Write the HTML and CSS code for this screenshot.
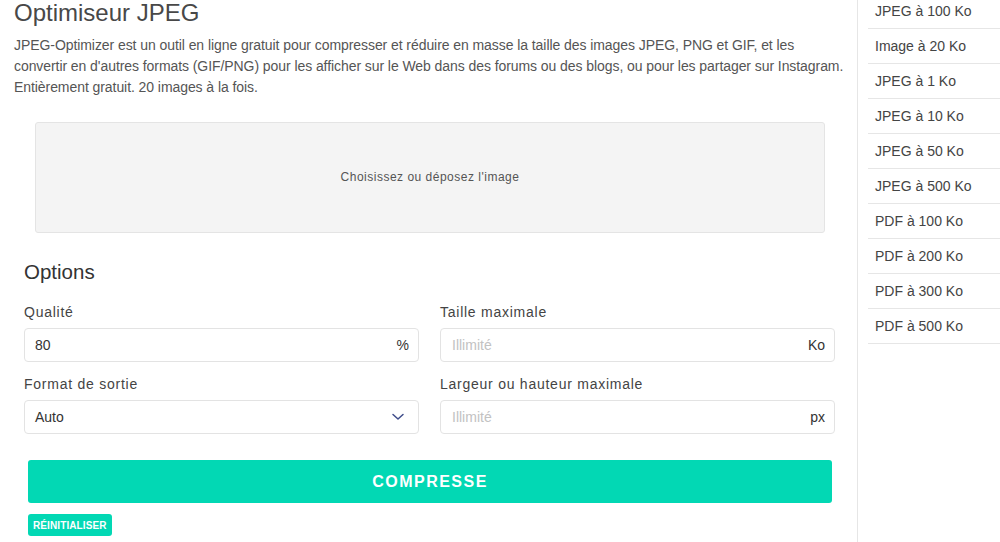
FILE: index.html
```html
<!DOCTYPE html>
<html lang="fr">
<head>
<meta charset="utf-8">
<title>Optimiseur JPEG</title>
<link rel="stylesheet" href="styles.css">
</head>
<body>
<div class="page">
  <main class="main">
    <h1 class="title">Optimiseur JPEG</h1>
    <p class="desc">JPEG-Optimizer est un outil en ligne gratuit pour compresser et réduire en masse la taille des images JPEG, PNG et GIF, et les convertir en d'autres formats (GIF/PNG) pour les afficher sur le Web dans des forums ou des blogs, ou pour les partager sur Instagram. Entièrement gratuit. 20 images à la fois.</p>
    <div class="form">
      <div class="dropzone">Choisissez ou déposez l'image</div>
      <h2 class="options-title">Options</h2>
      <div class="grid">
        <div class="field">
          <label class="label">Qualité</label>
          <div class="input"><span class="value">80</span><span class="suffix">%</span></div>
        </div>
        <div class="field">
          <label class="label">Taille maximale</label>
          <div class="input"><span class="placeholder">Illimité</span><span class="suffix">Ko</span></div>
        </div>
        <div class="field">
          <label class="label">Format de sortie</label>
          <div class="input"><span class="value">Auto</span>
            <svg class="chevron" width="14" height="8" viewBox="0 0 14 8"><path d="M2 1.5 L7 6 L12 1.5" fill="none" stroke="#3e4c8a" stroke-width="1.5" stroke-linecap="round" stroke-linejoin="round"/></svg>
          </div>
        </div>
        <div class="field">
          <label class="label">Largeur ou hauteur maximale</label>
          <div class="input"><span class="placeholder">Illimité</span><span class="suffix">px</span></div>
        </div>
      </div>
      <button class="btn-main">COMPRESSE</button>
      <button class="btn-reset">RÉINITIALISER</button>
    </div>
  </main>
  <aside class="side">
    <ul class="links">
      <li>JPEG à 100 Ko</li>
      <li>Image à 20 Ko</li>
      <li>JPEG à 1 Ko</li>
      <li>JPEG à 10 Ko</li>
      <li>JPEG à 50 Ko</li>
      <li>JPEG à 500 Ko</li>
      <li>PDF à 100 Ko</li>
      <li>PDF à 200 Ko</li>
      <li>PDF à 300 Ko</li>
      <li>PDF à 500 Ko</li>
    </ul>
  </aside>
</div>
</body>
</html>
```

FILE: styles.css
```css
* { box-sizing: border-box; }
html, body { margin: 0; padding: 0; background: #fff; }
body {
  font-family: "Liberation Sans", Arial, sans-serif;
  color: #444;
  width: 1000px;
  height: 542px;
  overflow: hidden;
}
.page {
  display: flex;
  height: 542px;
}
.main {
  width: 858px;
  flex: none;
  border-right: 1px solid #e6e6e6;
  padding: 0 12px 0 14px;
}
.title {
  margin: 0;
  font-size: 24px;
  line-height: 26px;
  font-weight: normal;
  color: #484848;
}
.desc {
  margin: 9px 0 0;
  font-size: 14px;
  line-height: 21px;
  letter-spacing: -0.07px;
  color: #555;
}
.form {
  padding: 0 10px;
}
.dropzone {
  margin: 24px 10px 0 11px;
  height: 111px;
  background: #f4f4f4;
  border: 1px solid #e4e4e4;
  border-radius: 3px;
  display: flex;
  align-items: center;
  justify-content: center;
  padding-bottom: 2px;
  font-size: 12px;
  letter-spacing: 0.5px;
  color: #555;
}
.options-title {
  margin: 27px 0 0;
  font-size: 20.5px;
  line-height: 24px;
  font-weight: normal;
  color: #333;
}
.grid {
  margin-top: 18px;
  display: grid;
  grid-template-columns: 395px 395px;
  column-gap: 21px;
  row-gap: 12px;
}
.field {
  display: flex;
  flex-direction: column;
}
.label {
  font-size: 14px;
  line-height: 20px;
  letter-spacing: 0.75px;
  color: #444;
  margin-bottom: 6px;
}
.input {
  height: 34px;
  border: 1px solid #e3e3e3;
  border-radius: 4px;
  display: flex;
  align-items: center;
  justify-content: space-between;
  padding: 0 9px 0 10px;
  font-size: 14px;
  color: #333;
}
.placeholder {
  color: #c2c2c2;
  padding-left: 1px;
}
.suffix {
  color: #333;
}
.chevron {
  margin-right: 4px;
}
.btn-main {
  display: block;
  margin: 26px 3px 0 4px;
  width: calc(100% - 7px);
  height: 43px;
  border: none;
  border-radius: 3px;
  background: #02d8b4;
  color: #fff;
  font-family: "Liberation Sans", Arial, sans-serif;
  font-weight: bold;
  font-size: 16px;
  letter-spacing: 1.5px;
  padding: 0;
}
.btn-reset {
  display: block;
  margin: 11px 0 0 4px;
  height: 22px;
  padding: 0 5px;
  border: none;
  border-radius: 3px;
  background: #02d8b4;
  color: #fff;
  font-family: "Liberation Sans", Arial, sans-serif;
  font-weight: bold;
  font-size: 10px;
  letter-spacing: 0.1px;
}
.side {
  flex: 1;
  padding-left: 10px;
}
.links {
  list-style: none;
  margin: -6px 0 0;
  padding: 0;
}
.links li {
  padding: 7px 7px;
  line-height: 20px;
  font-size: 14px;
  color: #444;
  border-bottom: 1px solid #e6e6e6;
}
```
